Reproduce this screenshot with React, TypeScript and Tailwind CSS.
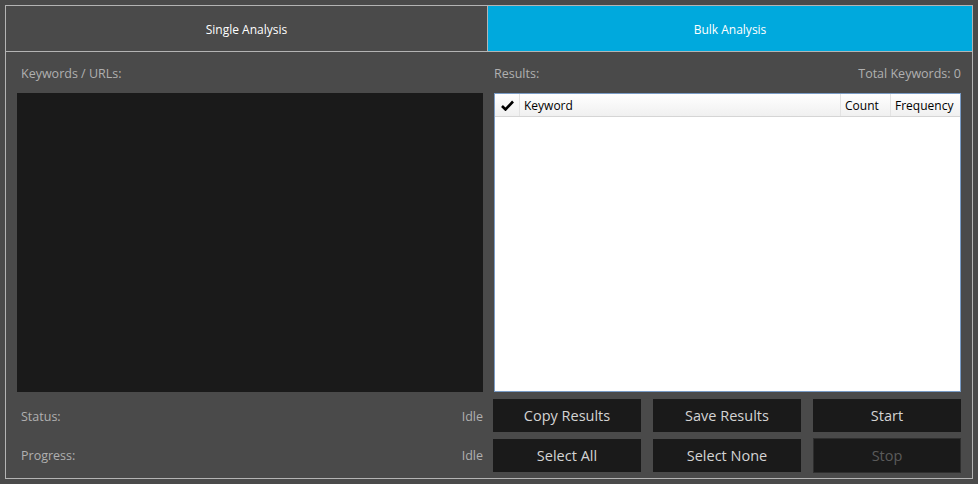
const Btn = ({ label, disabled }: { label: string; disabled?: boolean }) => (
  <button
    className={
      disabled
        ? "h-[35px] -my-[1px] bg-[#1a1a1a] border border-[#2e2e2e] text-[#5a5a5a] text-[14.5px]"
        : "h-[33px] bg-[#1a1a1a] text-[#d4d4d4] text-[14.5px]"
    }
  >
    {label}
  </button>
);

const App = () => {
  return (
    <div
      className="w-[978px] h-[484px] bg-[#4a4a4a] p-[5px]"
      style={{ fontFamily: '"Open Sans", "Noto Sans", sans-serif' }}
    >
      <div className="h-full border border-[#b4b4b4] flex flex-col">
        <div className="flex h-[46px] border-b border-[#b4b4b4]">
          <div className="w-[482px] border-r border-[#b4b4b4] flex items-center justify-center text-white text-[12px] pt-[2px]">
            Single Analysis
          </div>
          <div className="flex-1 bg-[#00a9dd] flex items-center justify-center text-white text-[12px] pt-[2px]">
            Bulk Analysis
          </div>
        </div>

        <div className="flex-1 flex gap-x-[10px] px-[11px] text-[12.5px] text-[#b0b0b0]">
          <div className="w-[466px] flex flex-col">
            <div className="h-[41px] flex items-center pl-[4px] pt-[4px]">Keywords / URLs:</div>
            <div className="h-[299px] bg-[#1a1a1a]"></div>
            <div className="h-[33px] mt-[7px] flex items-center justify-between pl-[4px] pt-[3px]">
              <span>Status:</span>
              <span>Idle</span>
            </div>
            <div className="h-[33px] mt-[7px] flex items-center justify-between pl-[4px] pt-[2px]">
              <span>Progress:</span>
              <span>Idle</span>
            </div>
          </div>

          <div className="flex-1 flex flex-col">
            <div className="h-[41px] flex items-center justify-between pl-[1px] pt-[4px]">
              <span>Results:</span>
              <span>Total Keywords: 0</span>
            </div>
            <div className="h-[299px] ml-[1px] bg-white border border-[#7a9cc6] flex flex-col">
              <div className="flex h-[23px] border-b border-[#d5d5d5] bg-gradient-to-b from-white to-[#f0f0f0] text-[12px] text-black">
                <div className="w-[25px] border-r border-[#e3e3e3] flex items-center justify-center">
                  <svg width="13" height="11" viewBox="0 0 13 11">
                    <path d="M1 6 L4.5 9.5 L12 1.5" stroke="#000" strokeWidth="2.6" fill="none" />
                  </svg>
                </div>
                <div className="w-[321px] border-r border-[#e3e3e3] flex items-center pl-[4px] pt-[1px]">Keyword</div>
                <div className="w-[50px] border-r border-[#e3e3e3] flex items-center pl-[4px] pt-[1px]">Count</div>
                <div className="flex-1 flex items-center pl-[4px] pt-[1px]">Frequency</div>
              </div>
            </div>
            <div className="mt-[7px] grid grid-cols-3 gap-x-[12px] gap-y-[7px]">
              <Btn label="Copy Results" />
              <Btn label="Save Results" />
              <Btn label="Start" />
              <Btn label="Select All" />
              <Btn label="Select None" />
              <Btn label="Stop" disabled />
            </div>
          </div>
        </div>
      </div>
    </div>
  );
};

export default App;
